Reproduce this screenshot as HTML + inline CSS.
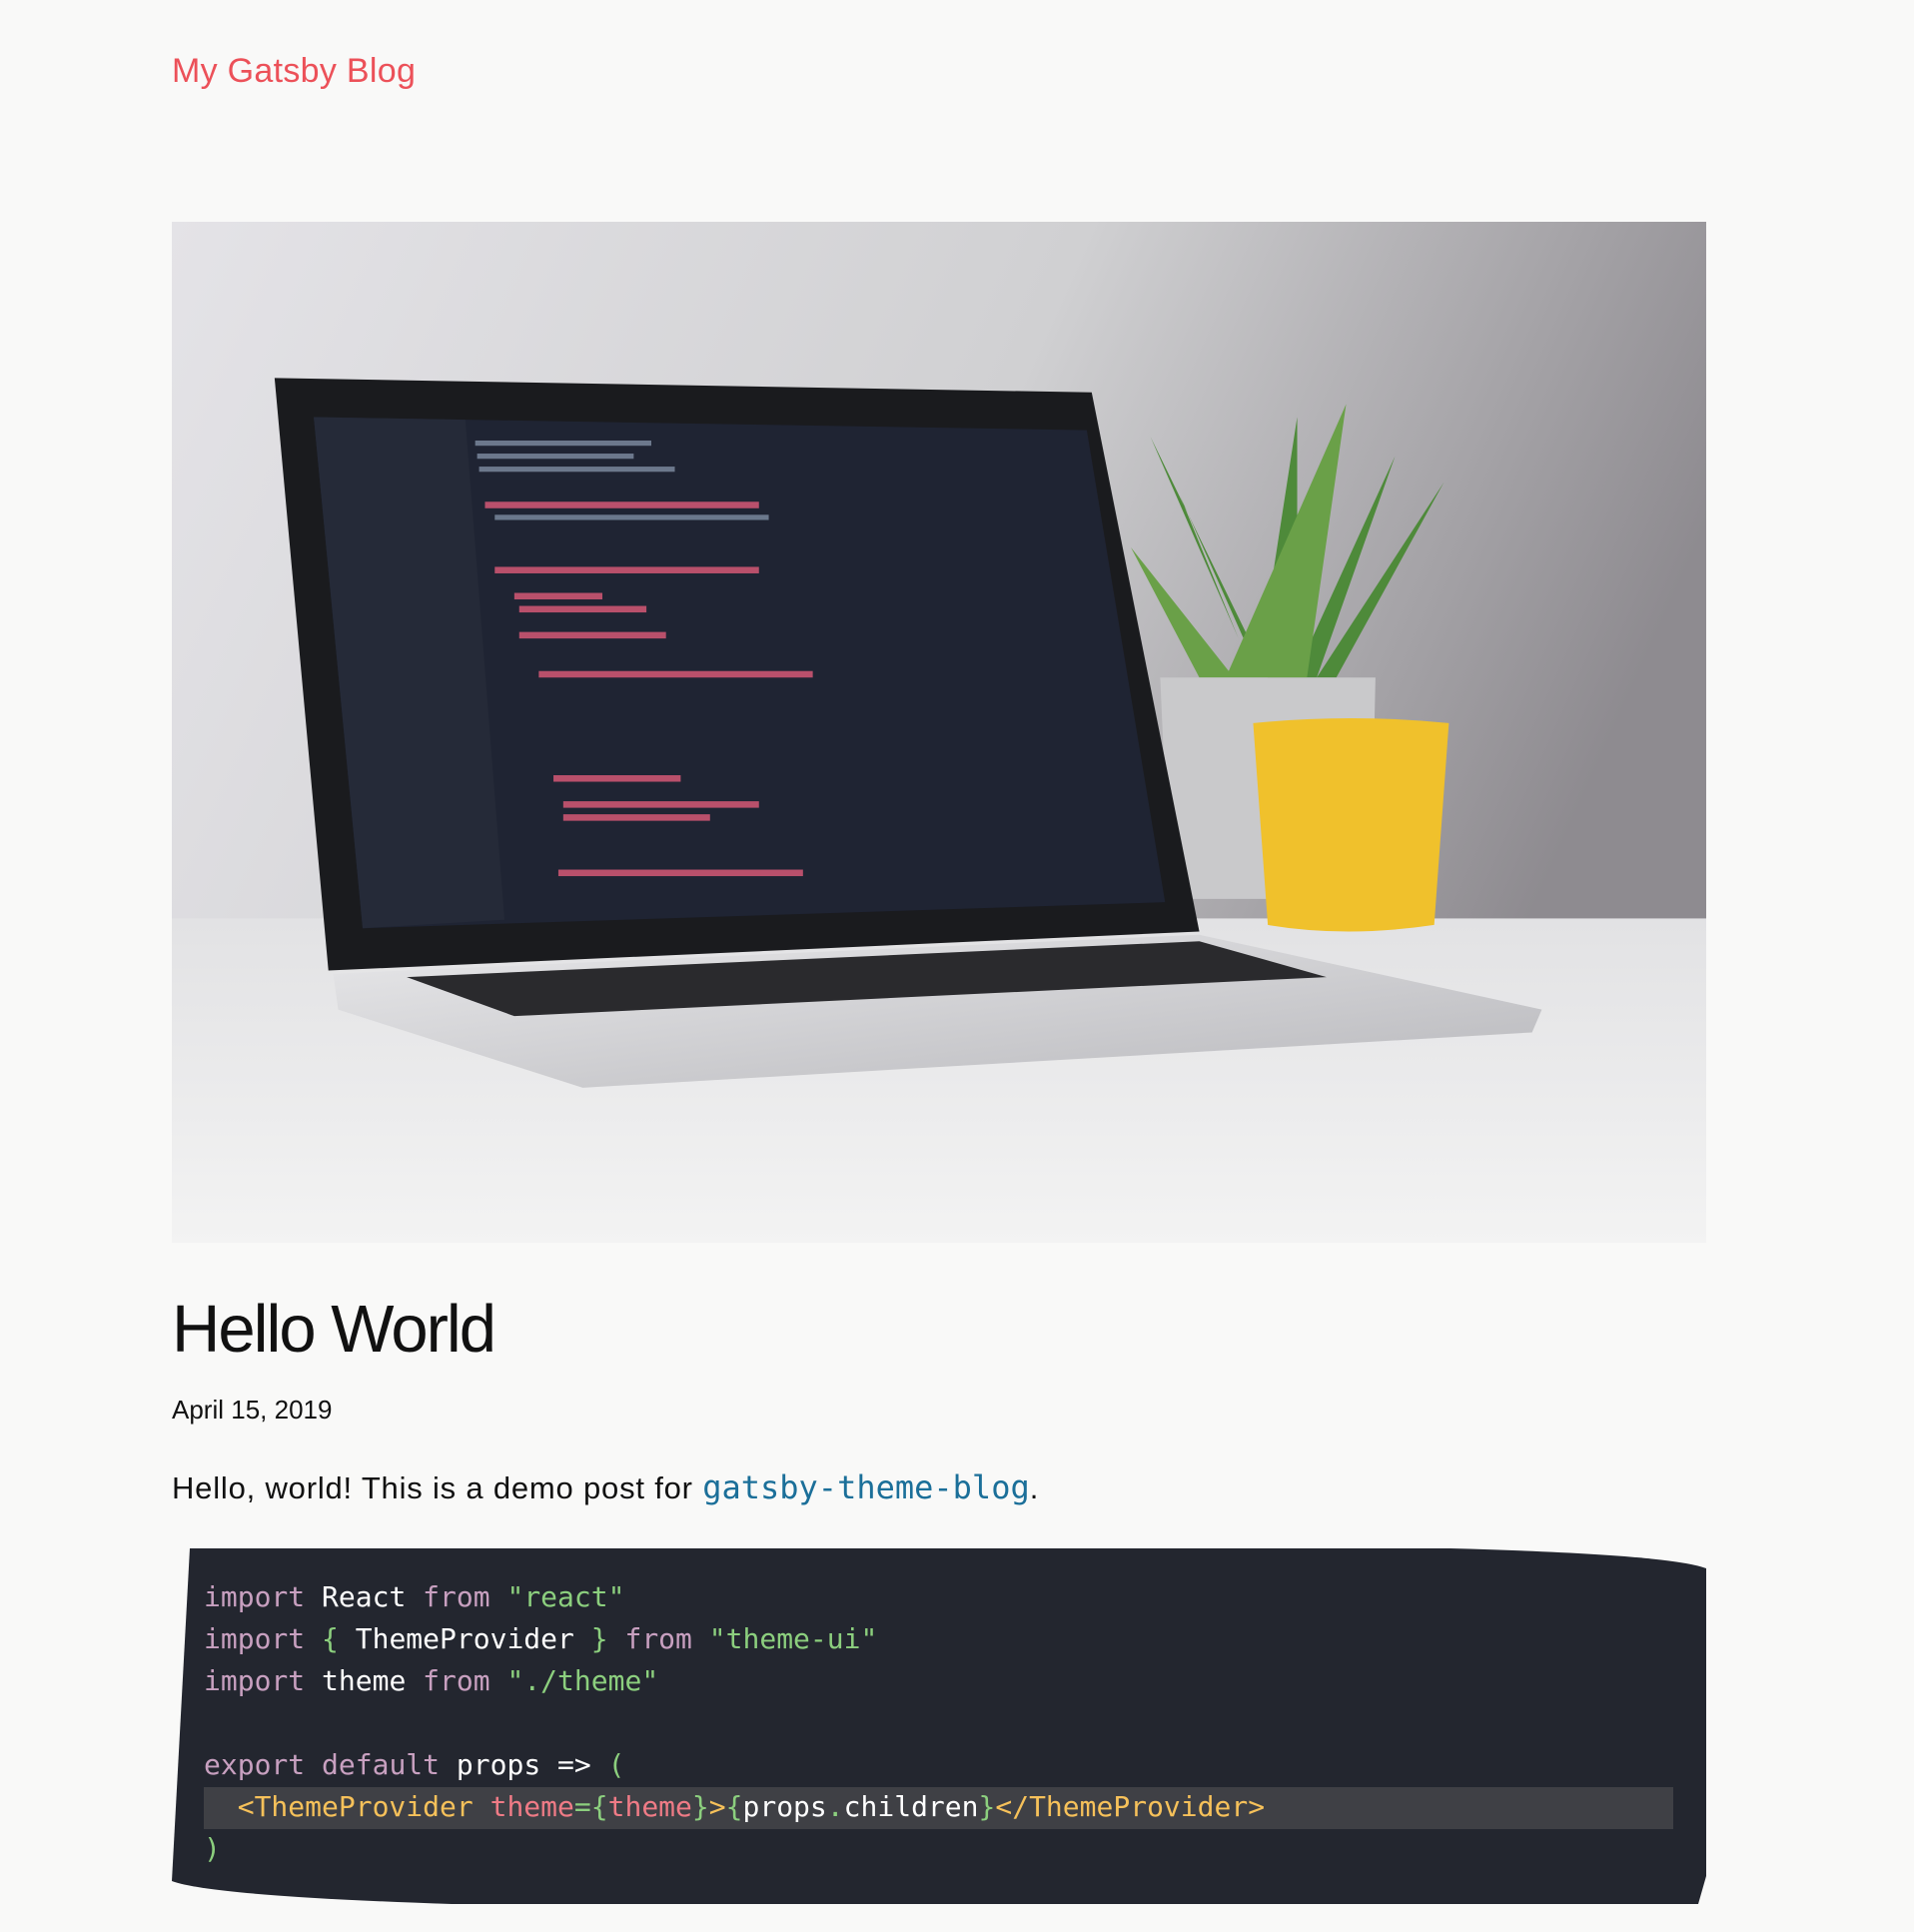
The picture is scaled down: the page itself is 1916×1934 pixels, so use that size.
<!DOCTYPE html>
<html><head><meta charset="utf-8"><style>
html,body{margin:0;padding:0;background:#f9f9f8;}
body{width:1916px;height:1934px;position:relative;overflow:hidden;font-family:"Liberation Sans",sans-serif;}
.title{position:absolute;left:172px;top:52px;font-size:34px;color:#ec5159;letter-spacing:0.3px;}
.hero{position:absolute;left:172px;top:222px;width:1536px;height:1022px;}
h1{position:absolute;left:172px;top:1292px;margin:0;font-size:67px;font-weight:normal;color:#111;letter-spacing:-2px;}
.date{position:absolute;left:172px;top:1396px;font-size:26px;color:#111;}
.p{position:absolute;left:172px;top:1470px;font-size:31px;color:#111;letter-spacing:0.8px;}
.p code{font-family:"DejaVu Sans Mono","Liberation Mono",monospace;color:#1b6f99;font-size:32px;letter-spacing:0;}
.code{position:absolute;left:172px;top:1548px;width:1536px;height:358px;}
pre{position:absolute;left:204px;top:1578px;margin:0;font-family:"DejaVu Sans Mono","Liberation Mono",monospace;font-size:28px;line-height:42px;color:#fff;}
.hl{position:absolute;left:204px;top:1789px;width:1471px;height:42px;background:#3f4045;}
.k{color:#c8a0c0}.s{color:#8ccf7e}.t{color:#f6c15a}.a{color:#ef7b86}.g{color:#8ccf7e}
</style></head><body>
<div class="title">My Gatsby Blog</div>
<svg class="hero" viewBox="0 0 1568 1568" preserveAspectRatio="none">
<defs>
<linearGradient id="wall" x1="0" y1="0" x2="1" y2="0.3"><stop offset="0" stop-color="#e4e3e7"/><stop offset="0.55" stop-color="#d0d0d2"/><stop offset="1" stop-color="#8e8b90"/></linearGradient>
<linearGradient id="desk" x1="0" y1="0" x2="0" y2="1"><stop offset="0" stop-color="#e2e2e4"/><stop offset="1" stop-color="#f3f3f3"/></linearGradient>
<linearGradient id="base" x1="0" y1="0" x2="1" y2="1"><stop offset="0" stop-color="#e8e8ea"/><stop offset="1" stop-color="#b8b8bc"/></linearGradient>
</defs>
<rect width="1568" height="1568" fill="url(#wall)"/>
<rect y="1070" width="1568" height="498" fill="url(#desk)"/>
<g fill="#4e8a3a">
<path d="M1120 700 L1000 330 L1090 640 L1030 420 L1110 690 L1150 300 L1150 690 L1250 360 L1170 700 L1300 400 L1190 700Z"/>
<path d="M1050 700 L980 500 L1080 690 L1200 280 L1160 700Z" fill="#6aa048"/>
</g>
<path d="M1010 700 L1230 700 L1225 1040 L1020 1040Z" fill="#c9c9cb"/>
<path d="M1105 770 Q1205 755 1305 770 L1290 1080 Q1200 1100 1120 1080Z" fill="#f0c12c"/>
<path d="M105 240 L940 262 L1050 1090 L160 1150 Z" fill="#1a1b1e"/>
<path d="M145 300 L935 320 L1015 1045 L195 1085 Z" fill="#1f2433"/>
<path d="M145 300 L300 304 L340 1072 L195 1085Z" fill="#252a38"/>
<g fill="#e05b7a" opacity="0.8"><rect x="320" y="430" width="280" height="10"/><rect x="330" y="530" width="270" height="10"/><rect x="350" y="570" width="90" height="10"/><rect x="355" y="590" width="130" height="10"/><rect x="355" y="630" width="150" height="10"/><rect x="375" y="690" width="280" height="10"/><rect x="390" y="850" width="130" height="10"/><rect x="400" y="890" width="200" height="10"/><rect x="400" y="910" width="150" height="10"/><rect x="395" y="995" width="250" height="10"/></g>
<g fill="#9fb0c8" opacity="0.6"><rect x="310" y="336" width="180" height="8"/><rect x="312" y="356" width="160" height="8"/><rect x="314" y="376" width="200" height="8"/><rect x="330" y="450" width="280" height="8"/></g>
<path d="M165 1155 L1050 1095 L1400 1210 L1390 1245 L420 1330 L170 1210 Z" fill="url(#base)"/>
<path d="M240 1160 L1050 1105 L1180 1160 L350 1220 Z" fill="#2a2a2d"/>
</svg>
<h1>Hello World</h1>
<div class="date">April 15, 2019</div>
<div class="p">Hello, world! This is a demo post for <code>gatsby-theme-blog</code>.</div>
<svg class="code" viewBox="0 0 1536 358" preserveAspectRatio="none"><path d="M18 2 L1280 2 Q1500 8 1536 22 L1536 330 L1528 358 L280 358 Q40 350 0 335 Z" fill="#23262f"/></svg>
<div class="hl"></div>
<pre><span class="k">import</span> React <span class="k">from</span> <span class="s">"react"</span>
<span class="k">import</span> <span class="g">{</span> ThemeProvider <span class="g">}</span> <span class="k">from</span> <span class="s">"theme-ui"</span>
<span class="k">import</span> theme <span class="k">from</span> <span class="s">"./theme"</span>

<span class="k">export</span> <span class="k">default</span> props =&gt; <span class="g">(</span>
  <span class="t">&lt;ThemeProvider</span> <span class="a">theme</span><span class="g">={</span><span class="a">theme</span><span class="g">}</span><span class="t">&gt;</span><span class="g">{</span>props<span class="g">.</span>children<span class="g">}</span><span class="t">&lt;/ThemeProvider&gt;</span>
<span class="g">)</span></pre>
</body></html>
